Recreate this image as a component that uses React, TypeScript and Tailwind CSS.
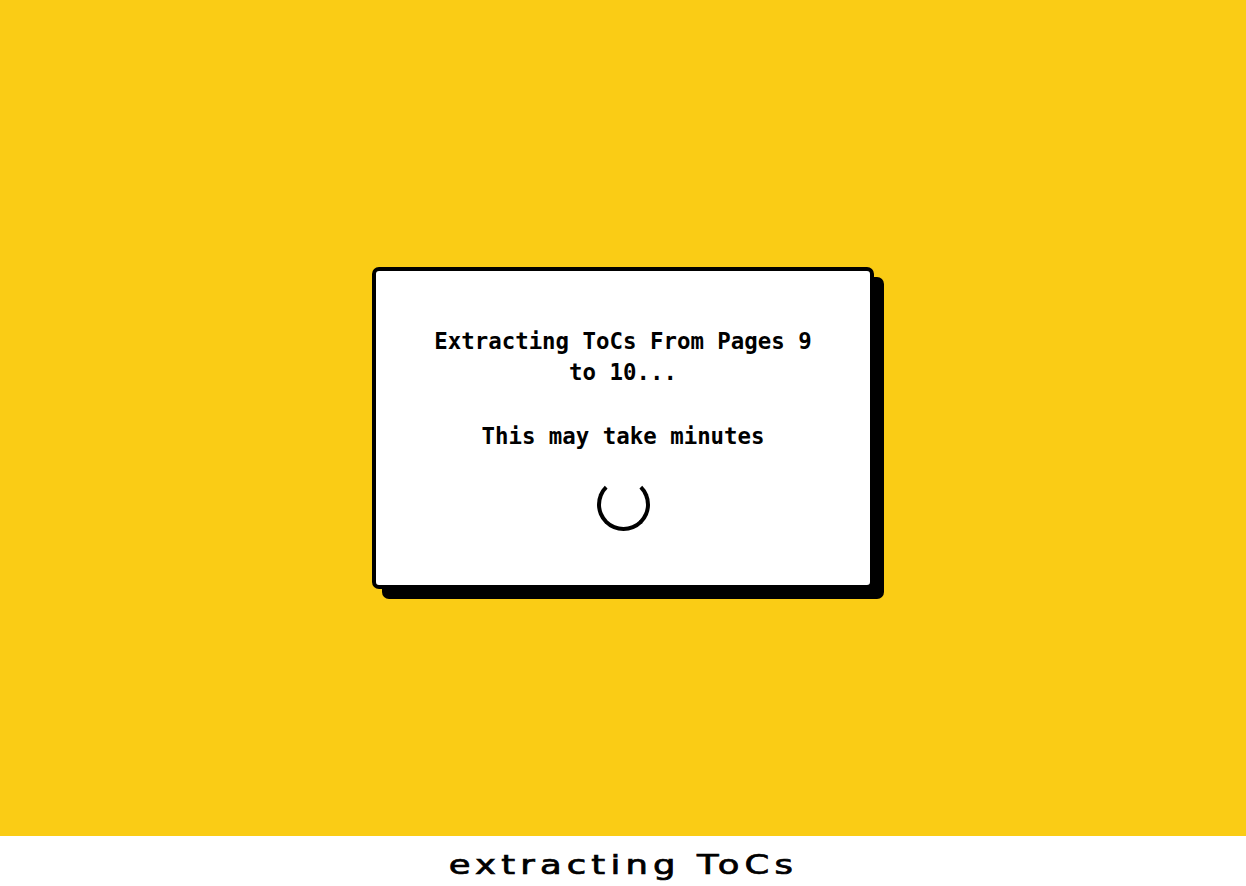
import React from "react";

export default function App() {
  return (
    <div className="w-full h-[886px] flex flex-col overflow-hidden">
      <div className="h-[836px] bg-[#facc15] flex items-center justify-center pt-[20px]">
        <div className="w-[502px] h-[322px] bg-white border-4 border-black rounded-[7px] shadow-[10px_10px_0_0_#000] flex flex-col items-center px-12 pt-[55px]">
          <div
            className="text-center text-black font-bold text-[22.4px] leading-[31px]"
            style={{ fontFamily: '"DejaVu Sans Mono", "Liberation Mono", monospace' }}
          >
            <p>Extracting ToCs From Pages 9 to 10...</p>
            <p className="mt-[33px]">This may take minutes</p>
          </div>
          <div className="mt-[26px] w-[53px] h-[53px] rounded-full border-4 border-black border-t-transparent" />
        </div>
      </div>
      <div className="h-[50px] bg-white flex justify-center">
        <span
          className="inline-block pt-2 leading-[42px] text-[26px] font-normal text-black tracking-[3.8px] scale-x-[1.36] origin-center [-webkit-text-stroke:0.7px_black]"
          style={{ fontFamily: '"DejaVu Sans", "Liberation Sans", sans-serif' }}
        >
          extracting ToCs
        </span>
      </div>
    </div>
  );
}
